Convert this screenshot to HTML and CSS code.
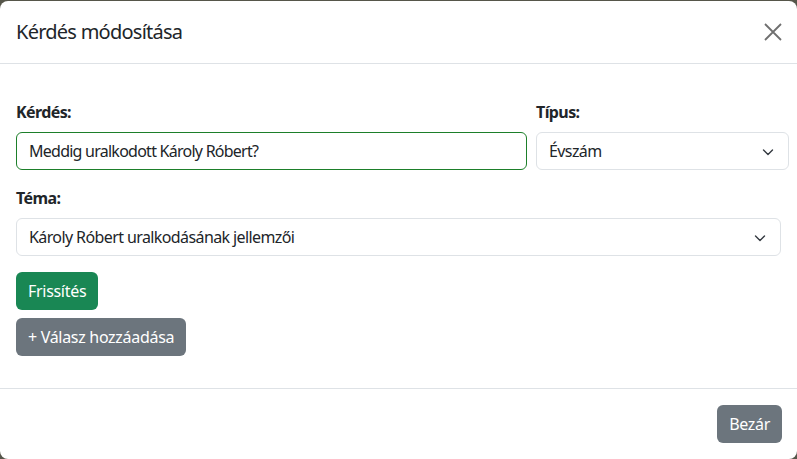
FILE: index.html
```html
<!DOCTYPE html>
<html lang="hu">
<head>
<meta charset="utf-8">
<title>Kérdés módosítása</title>
<link rel="stylesheet" href="styles.css">
</head>
<body>
<div class="modal">
  <div class="modal-header">
    <h5 class="modal-title">Kérdés módosítása</h5>
    <button class="btn-close" type="button" aria-label="Close">
      <svg width="18" height="18" viewBox="0 0 18 18"><path d="M1 1L17 17M17 1L1 17" stroke="#6f6f6f" stroke-width="1.8" fill="none"/></svg>
    </button>
  </div>
  <div class="modal-body">
    <div class="row">
      <div class="col col-main">
        <label class="form-label">Kérdés:</label>
        <div class="form-control valid">Meddig uralkodott Károly Róbert?</div>
      </div>
      <div class="col col-side">
        <label class="form-label">Típus:</label>
        <div class="form-select">Évszám
          <svg class="chev" width="16" height="16" viewBox="0 0 16 16"><path d="M3.5 6l4.5 4.5 4.5-4.5" stroke="#343a40" stroke-width="1.4" fill="none" stroke-linecap="round" stroke-linejoin="round"/></svg>
        </div>
      </div>
    </div>
    <div class="field">
      <label class="form-label">Téma:</label>
      <div class="form-select">Károly Róbert uralkodásának jellemzői
        <svg class="chev" width="16" height="16" viewBox="0 0 16 16"><path d="M3.5 6l4.5 4.5 4.5-4.5" stroke="#343a40" stroke-width="1.4" fill="none" stroke-linecap="round" stroke-linejoin="round"/></svg>
      </div>
    </div>
    <div class="actions">
      <button class="btn btn-success" type="button">Frissítés</button>
      <button class="btn btn-secondary" type="button">+ Válasz hozzáadása</button>
    </div>
  </div>
  <div class="modal-footer">
    <button class="btn btn-secondary" type="button">Bezár</button>
  </div>
</div>
</body>
</html>
```
FILE: styles.css
```css
* { box-sizing: border-box; }
html, body { margin: 0; padding: 0; }
body {
  background: #56564a;
  height: 459px;
  overflow: hidden;
  font-family: "Noto Sans", "Open Sans", sans-serif;
  font-size: 16px;
  letter-spacing: -0.6px;
  color: #212529;
}
.modal {
  margin-top: 1px;
  height: 458px;
  background: #fff;
  border-radius: 8px;
  display: flex;
  flex-direction: column;
}
.modal-header {
  height: 63px;
  border-bottom: 1px solid #dee2e6;
  display: flex;
  align-items: center;
  justify-content: space-between;
  padding: 0 15px 0 16px;
}
.modal-title {
  margin: 0;
  font-size: 20px;
  font-weight: 400;
  line-height: 24px;
  letter-spacing: -0.75px;
}
.btn-close {
  border: 0;
  background: transparent;
  padding: 0;
  width: 18px;
  height: 18px;
  display: flex;
}
.modal-body {
  flex: 1;
  padding: 36px 16px 0;
}
.row {
  display: flex;
  gap: 9px;
  margin-right: -8px;
}
.col-main { width: 511px; }
.col-side { width: 253px; }
.form-label {
  display: block;
  font-weight: 700;
  line-height: 24px;
  margin-bottom: 8px;
}
.form-control, .form-select {
  height: 38px;
  border: 1px solid #dee2e6;
  border-radius: 6px;
  padding: 0 12px;
  display: flex;
  align-items: center;
  line-height: 24px;
  position: relative;
}
.form-control.valid { border-color: #1d7f2a; letter-spacing: -0.75px; }
.chev {
  position: absolute;
  right: 12px;
  top: 11px;
}
.field { margin-top: 16px; }
.actions {
  margin-top: 16px;
  display: flex;
  flex-direction: column;
  align-items: flex-start;
  gap: 8px;
}
.btn {
  font-family: inherit;
  font-size: 16px;
  letter-spacing: -0.3px;
  line-height: 24px;
  height: 38px;
  padding: 0 12px;
  border: 0;
  border-radius: 6px;
  color: #fff;
}
.btn-success { background: #198754; }
.btn-secondary { background: #6c757d; }
.modal-footer {
  border-top: 1px solid #dee2e6;
  height: 71px;
  display: flex;
  justify-content: flex-end;
  align-items: flex-start;
  padding: 16px 15px 0;
}
```
